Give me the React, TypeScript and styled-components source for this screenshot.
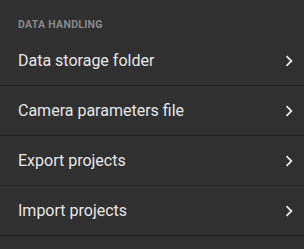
import { createGlobalStyle } from "styled-components";
import styled from "styled-components";

const GlobalStyle = createGlobalStyle`
  html, body {
    margin: 0;
    padding: 0;
    background: #303030;
  }
`;

const items = [
  "Data storage folder",
  "Camera parameters file",
  "Export projects",
  "Import projects",
];

const Chevron = () => (
  <svg width="22" height="22" viewBox="0 0 24 24" fill="#e6e6e6">
    <path d="M8.59 16.59L13.17 12 8.59 7.41 10 6l6 6-6 6-1.41-1.41z" />
  </svg>
);

const App = () => {
  return (
    <Wrapper>
      <GlobalStyle />
      <Header>Data handling</Header>
      <List>
        {items.map((item) => (
          <Row key={item}>
            <Label>{item}</Label>
            <Chevron />
          </Row>
        ))}
      </List>
    </Wrapper>
  );
};

export default App;

const Wrapper = styled.div`
  width: 304px;
  height: 249px;
  background: #303030;
  font-family: Roboto, "Liberation Sans", sans-serif;
  overflow: hidden;
`;

const Header = styled.div`
  height: 36px;
  box-sizing: border-box;
  padding: 18px 18px 0;
  font-size: 10.5px;
  font-weight: 700;
  letter-spacing: 0.3px;
  text-transform: uppercase;
  color: #8a8a8a;
`;

const List = styled.div`
  display: flex;
  flex-direction: column;
`;

const Row = styled.div`
  display: flex;
  align-items: center;
  justify-content: space-between;
  height: 49px;
  padding: 0 4px 0 18px;
  border-bottom: 1px solid #212121;
  cursor: pointer;
`;

const Label = styled.span`
  font-size: 16px;
  color: #e6e6e6;
`;
